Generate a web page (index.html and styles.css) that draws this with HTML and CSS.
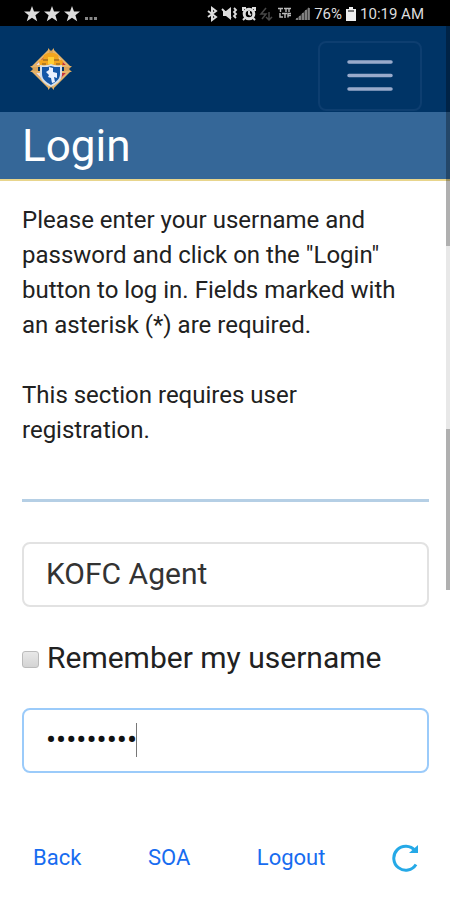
FILE: index.html
```html
<!DOCTYPE html>
<html lang="en">
<head>
<meta charset="utf-8">
<meta name="viewport" content="width=device-width, initial-scale=1">
<title>Login</title>
<link rel="stylesheet" href="styles.css">
</head>
<body>
<div class="app">
  <div class="status">
    <div class="notices">
      <svg width="74" height="16" viewBox="0 0 74 16" fill="#ddd" aria-hidden="true">
        <defs><path id="star" d="M8 0l2 5.400h6l-4.600 3.800 1.800 6L8 11.800 2.800 15.200l1.800-6L0 5.400h6z"/></defs>
        <use href="#star"/><use href="#star" x="20"/><use href="#star" x="40"/>
        <path fill="#888" d="M61 11h3v3h-3zM65.500 11h3v3h-3zM70 11h3v3h-3z"/>
      </svg>
    </div>
    <div class="system">
      <svg width="103" height="16" viewBox="0 0 103 16" fill="none" stroke="#ddd" stroke-width="2" aria-hidden="true">
        <path d="M1 5l8 6-4 3V2l4 3-8 6"/>
        <path fill="#ddd" stroke="none" d="M16 5h3l5-4v13l-5-4h-3z"/>
        <path d="M15 3l9 9M27 2l2 2-2 2 2 2-2 2 2 2" stroke-width="1.800"/>
        <circle cx="42" cy="8" r="4.800" stroke-width="3"/>
        <path d="M36 5V2h3M48 5V2h-3M38 12l-2 2M46 12l2 2M42 5v3l2 1" stroke-width="2"/>
        <path stroke="#484848" stroke-width="1.500" d="M59 2l-5 6h5l-4 5M62 6v7M59 11l3 3 3-3"/>
        <path d="M71 2.500h5M73.500 2v4M77 2.500h7M79 2v4M82 2v4M73 7v4h3M75 7.500h5M78 7v5M84 7.500h-3v4M81 9.500h3" stroke="#bbb" stroke-width="1.400"/>
        <path fill="#444" stroke="none" d="M102 1v13H88z"/>
        <path d="M90 12v2M93 10v4M96 7v7M99 4v10M102 2v12" stroke="#999" stroke-width="1.400"/>
      </svg>
      <span>76%</span>
      <svg width="10" height="14" viewBox="0 0 10 14" aria-hidden="true"><path fill="#eee" d="M3 0h4v2h3v12H0V2h3z"/><path fill="#777" d="M2 3h6v2H2z"/></svg>
      <span>10:19 AM</span>
    </div>
  </div>
  <div class="page">
    <header class="navbar">
      <a class="brand" href="#" aria-label="Home">
        <svg width="46" height="42" viewBox="0 0 46 42" aria-hidden="true">
          <path d="M20 0l3 3 3-3v8h-6zM20 42l3-3 3 3v-8h-6zM2 18l3 3-3 3h8v-6zM44 18l-3 3 3 3h-8v-6z" fill="#d9a45a"/>
          <path d="M21 1v18H3zM25 1v18h18zM3 23h18v18zM43 23H25v18z" fill="#e6b46a"/>
          <path d="M19 6v11H8zM8 25h11v11z" fill="#b92734"/>
          <path d="M27 6v11h11zM38 25H27v11z" fill="#eee5df"/>
          <path d="M33 12l5 5h-6zM38 25l-5 5-2-5z" fill="#c63539"/>
          <path d="M13 12l-5 5h6zM8 25l5 5 2-5z" fill="#eee5df"/>
          <path d="M11 13l4-2 1-4 4-2h6l4 2 1 4 4 2-1 6H12z" fill="#f3a51e"/>
          <path d="M15 12h16M14 16h4M28 16h4" stroke="#765525" stroke-width="1"/>
          <path d="M20 9h6v7h-6z" fill="#ffce35"/>
          <path d="M12 17c5 1 8 0 11-1 3 1 6 2 11 1v9c0 6-5 10-11 13-6-3-11-7-11-13z" fill="#d6dfe8"/>
          <path d="M14 19c4 0 7 0 9-1 2 1 5 1 9 1v7c0 5-4 8-9 11-5-3-9-6-9-11z" fill="#1557a8"/>
          <path d="M21 19l4 1v4l4 1v5l-3-1 1 5-3 1-1-5-3-1 1-2-3-3 3-2z" fill="#eaf0ff"/>
        </svg>
      </a>
      <button class="toggle" type="button" aria-label="Menu">
        <svg width="46" height="34" viewBox="0 0 46 34" aria-hidden="true"><path d="M2 3h42M2 16.500h42M2 30h42" stroke="#99aacb" stroke-width="3.500" stroke-linecap="round"/></svg>
      </button>
    </header>
    <h1 class="title">Login</h1>
    <main class="content">
      <p class="intro">Please enter your username and password and click on the "Login" button to log in. Fields marked with an asterisk (*) are required.</p>
      <p class="intro">This section requires user registration.</p>
      <hr class="rule">
      <form class="form">
        <input class="field" type="text" value="KOFC Agent" aria-label="Username">
        <label class="remember"><input class="check" type="checkbox"><span>Remember my username</span></label>
        <div class="secret">
          <input class="field active" type="password" value="agentpass" aria-label="Password">
          <span class="caret"></span>
        </div>
      </form>
    </main>
    <div class="scroll"><div class="thumb"></div></div>
  </div>
  <nav class="tabs">
    <a href="#">Back</a>
    <a href="#">SOA</a>
    <a href="#">Logout</a>
    <button class="reload" type="button" aria-label="Reload">
      <svg width="28" height="28" viewBox="0 0 28 28" fill="none" stroke="#25a9e7" stroke-width="3" aria-hidden="true"><path d="M24 20.500A12 12 0 1 1 23 6.500"/><path d="M26 1v8h-9z" fill="#25a9e7" stroke="none"/></svg>
    </button>
  </nav>
</div>
</body>
</html>
```
FILE: styles.css
```css
* { box-sizing: border-box; }
body {
  margin: 0;
  background: #fff;
  color: #212121;
  font-family: Roboto, "Liberation Sans", sans-serif;
}
svg { display: block; }
a { color: #176cf0; text-decoration: none; }
.app { min-height: 100vh; display: flex; flex-direction: column; }
.status {
  display: flex;
  justify-content: space-between;
  align-items: center;
  height: 26px;
  padding: 2px 26px 0 24px;
  background: #000;
  color: #ddd;
  font-size: 15px;
  line-height: 24px;
}
.system { display: flex; align-items: center; gap: 4px; }
.page { position: relative; flex: 1; }
.navbar {
  display: flex;
  justify-content: space-between;
  align-items: center;
  height: 86px;
  padding: 0 28px;
  background: #003466;
}
.toggle {
  display: flex;
  align-items: center;
  justify-content: center;
  width: 104px;
  height: 70px;
  margin-top: 14px;
  padding: 0;
  border: 2px solid #0d3e70;
  border-radius: 8px;
  background: transparent;
}
.title {
  margin: 0;
  padding: 6px 22px 5px;
  border-bottom: 2px solid #e8d58c;
  background: #356798;
  color: #fff;
  font-size: 44px;
  line-height: 56px;
  font-weight: 400;
}
.content { padding: 22px 21px 0 22px; }
.intro { margin: 0 0 35px; padding-right: 24px; font-size: 24px; line-height: 35px; }
.rule { margin: 51px 0 40px; border: 0; border-top: 3px solid #b5cfe5; }
.form { display: flex; flex-direction: column; }
.field {
  display: block;
  width: 100%;
  height: 65px;
  padding: 0 22px 2px;
  border: 2px solid #e2e2e2;
  border-radius: 8px;
  outline: 0;
  background: #fff;
  color: #333;
  font: 400 30px/40px Roboto, "Liberation Sans", sans-serif;
}
.active { border-color: #9bcbfa; color: #111; }
.remember {
  display: flex;
  align-items: center;
  gap: 8px;
  height: 40px;
  margin: 31px 0 30px;
  font-size: 30px;
  line-height: 40px;
}
.check {
  appearance: none;
  width: 17px;
  height: 17px;
  margin: 2px 0 0;
  border: 1px solid #bbb;
  border-radius: 3px;
  background: linear-gradient(#e8e8e8, #d4d4d4);
}
.secret { position: relative; }
.caret {
  position: absolute;
  left: 114px;
  top: 15px;
  width: 1px;
  height: 34px;
  background: #777;
}
.scroll {
  position: absolute;
  top: 0;
  right: 0;
  width: 4px;
  height: 564px;
  padding-top: 220px;
  background: rgba(0, 0, 0, 0.31);
}
.thumb { height: 183px; background: #e8e8e8; }
.tabs {
  display: flex;
  justify-content: space-between;
  align-items: center;
  height: 84px;
  padding: 0 30px 0 33px;
  font-size: 22px;
  line-height: 28px;
}
.reload { padding: 0; border: 0; background: transparent; }
```
